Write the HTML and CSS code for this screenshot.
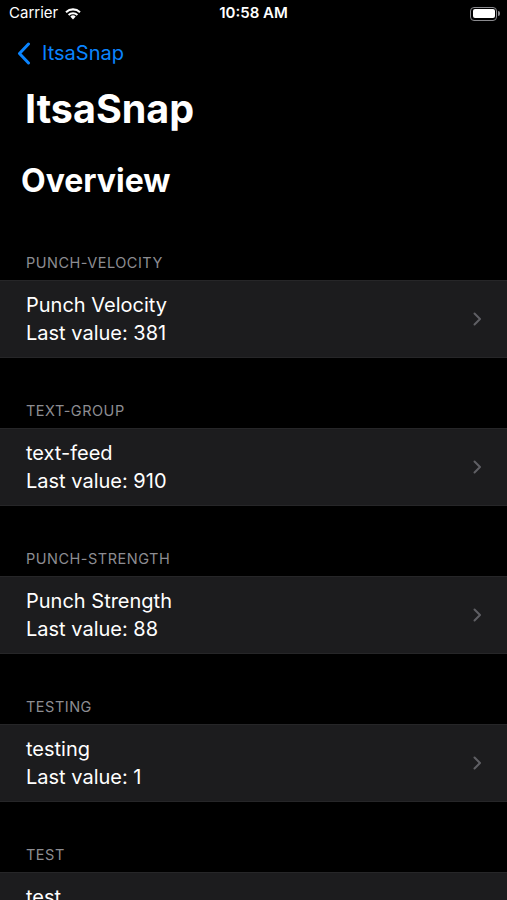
FILE: index.html
```html
<!DOCTYPE html>
<html lang="en">

<head>
    <meta charset="UTF-8">
    <meta name="viewport" content="width=device-width, initial-scale=1.0">
    <title>ItsaSnap</title>
    <link rel="stylesheet" href="styles.css">
</head>

<body>
    <div class="status-bar">
        <div class="carrier">
            Carrier
            <svg class="wifi" width="18" height="13" viewBox="0 0 18 13">
                <path d="M9 12.6 L6.3 9.6 A4 4 0 0 1 11.7 9.6 Z" fill="#fff" />
                <path d="M3.9 7.2 A7.4 7.4 0 0 1 14.1 7.2 L12.7 8.7 A5.4 5.4 0 0 0 5.3 8.7 Z" fill="#fff" />
                <path d="M1.3 4.4 A11.2 11.2 0 0 1 16.7 4.4 L15.3 5.9 A9.2 9.2 0 0 0 2.7 5.9 Z" fill="#fff" />
            </svg>
        </div>
        <div class="time">10:58 AM</div>
        <div class="battery">
            <span class="battery-body"><span class="battery-level"></span></span>
            <span class="battery-cap"></span>
        </div>
    </div>

    <nav class="nav-bar">
        <a class="back-button" href="#">
            <svg width="14" height="23" viewBox="0 0 14 23">
                <path d="M11.5 2 L2.5 11.5 L11.5 21" fill="none" stroke="#0a84ff" stroke-width="3" stroke-linecap="round" stroke-linejoin="round" />
            </svg>
            ItsaSnap
        </a>
    </nav>

    <main>
        <h1 class="page-title">ItsaSnap</h1>
        <h2 class="page-subtitle">Overview</h2>

        <div class="group-list" id="group-list"></div>
    </main>

    <script>
        const groups = [
            { key: 'PUNCH-VELOCITY', name: 'Punch Velocity', value: 381 },
            { key: 'TEXT-GROUP', name: 'text-feed', value: 910 },
            { key: 'PUNCH-STRENGTH', name: 'Punch Strength', value: 88 },
            { key: 'TESTING', name: 'testing', value: 1 },
            { key: 'TEST', name: 'test', value: null }
        ];

        const list = document.getElementById('group-list');

        groups.forEach(group => {
            const section = document.createElement('section');
            section.classList.add('group');

            const header = document.createElement('div');
            header.classList.add('group-header');
            header.textContent = group.key;
            section.appendChild(header);

            const row = document.createElement('div');
            row.classList.add('group-row');

            const text = document.createElement('div');
            text.classList.add('row-text');
            text.innerHTML = `<div>${group.name}</div>`;
            if (group.value !== null) {
                text.innerHTML += `<div>Last value: ${group.value}</div>`;
            }
            row.appendChild(text);

            row.innerHTML += `<svg class="chevron" width="9" height="14" viewBox="0 0 9 14">
                <path d="M1.5 1.5 L7 7 L1.5 12.5" fill="none" stroke="#5f5f64" stroke-width="2" stroke-linecap="round" stroke-linejoin="round" />
            </svg>`;

            section.appendChild(row);
            list.appendChild(section);
        });
    </script>
</body>

</html>
```

FILE: styles.css
```css
body {
    margin: 0;
    padding: 0;
    background-color: #000;
    color: #fff;
    font-family: Inter, "Liberation Sans", sans-serif;
    width: 507px;
    overflow-x: hidden;
}

.status-bar {
    height: 26px;
    display: flex;
    align-items: center;
    justify-content: space-between;
    padding: 0 7px 0 9px;
    position: relative;
}

.carrier {
    display: flex;
    align-items: center;
    gap: 6px;
    font-size: 15px;
    line-height: 18px;
}

.time {
    position: absolute;
    left: 0;
    right: 0;
    text-align: center;
    font-size: 15px;
    font-weight: 600;
    line-height: 18px;
}

.battery {
    display: flex;
    align-items: center;
    margin-top: 1px;
}

.battery-body {
    width: 22px;
    height: 9px;
    border: 1.5px solid #8a8a8e;
    border-radius: 4px;
    padding: 1.5px;
    display: block;
}

.battery-level {
    display: block;
    width: 100%;
    height: 100%;
    background-color: #fff;
    border-radius: 2px;
}

.battery-cap {
    width: 2px;
    height: 5px;
    margin-left: 1px;
    background-color: #8a8a8e;
    border-radius: 0 2px 2px 0;
}

.nav-bar {
    height: 48px;
    display: flex;
    align-items: center;
    padding: 3px 0 0 17px;
}

.back-button {
    display: flex;
    align-items: center;
    gap: 11px;
    color: #0a84ff;
    text-decoration: none;
    font-size: 20px;
    line-height: 24px;
}

.page-title {
    margin: 9px 0 0 0;
    padding-left: 25px;
    font-size: 39.5px;
    line-height: 46px;
    font-weight: 700;
}

.page-subtitle {
    margin: 29px 0 0 0;
    padding-left: 21px;
    font-size: 32px;
    line-height: 40px;
    font-weight: 700;
}

.group-list {
    margin-top: 9px;
}

.group-header {
    padding: 44px 26px 8px 26px;
    font-size: 14.5px;
    line-height: 18px;
    letter-spacing: 0.5px;
    color: #8d8d92;
}

.group-row {
    display: flex;
    align-items: center;
    justify-content: space-between;
    background-color: #1c1c1e;
    border-top: 1px solid #262628;
    border-bottom: 1px solid #262628;
    padding: 10px 26px 10px 26px;
    min-height: 56px;
}

.row-text {
    align-self: flex-start;
    font-size: 20px;
    line-height: 28px;
}

.chevron {
    margin-right: -1px;
}
```
